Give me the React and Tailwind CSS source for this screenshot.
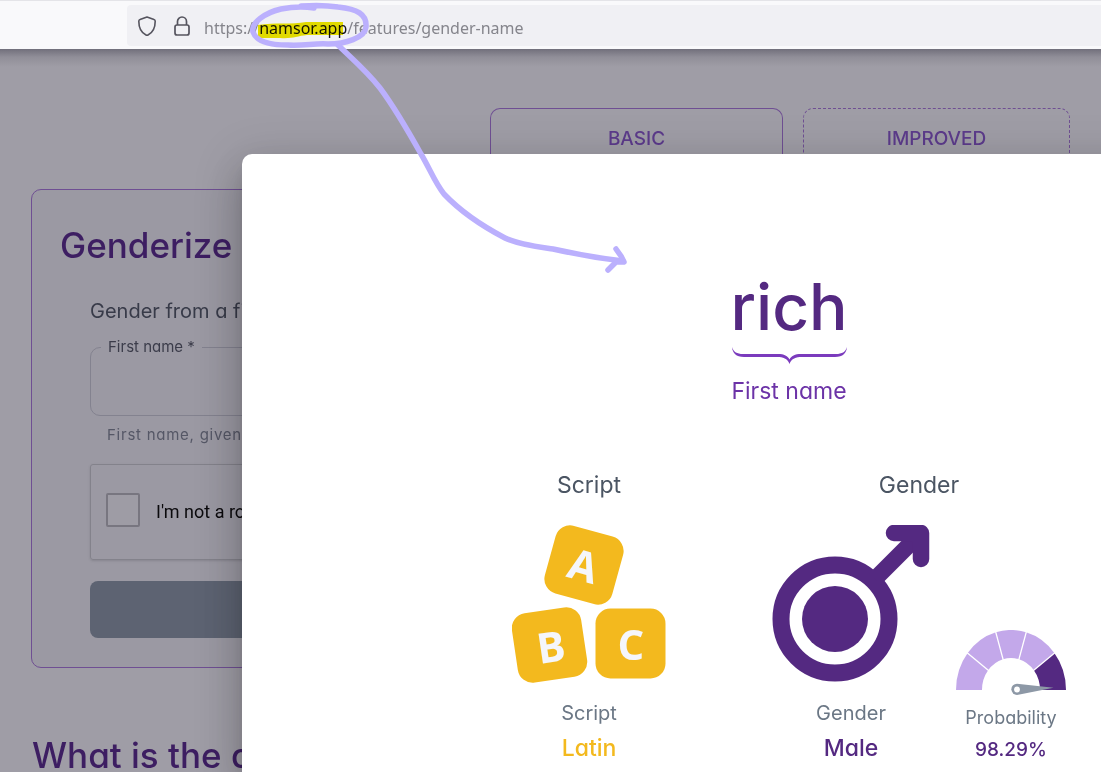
import React from "react";

function BrowserBar() {
  return (
    <header className="flex h-[49px] shrink-0 border-t border-[#e4e4e8] bg-[#f9f9fb] pt-1 pb-[3px] pl-[127px]">
      <div className="flex grow items-center rounded-l bg-[#f0f0f4] pl-[10px]">
        <svg className="mr-4 h-5 w-5" viewBox="0 0 20 20" fill="none" stroke="#55545e" strokeWidth="1.6" strokeLinejoin="round" aria-hidden="true">
          <path d="M10 1 L17 3.6 Q18.2 4 18.2 5.2 C18.2 12 16 16.500 11 19 Q10 19.500 9 19 C4 16.500 1.800 12 1.800 5.200 Q1.800 4 3 3.600 Z" />
        </svg>
        <svg className="mr-[13px] h-5 w-[18px]" viewBox="0 0 18 20" fill="none" stroke="#55545e" strokeWidth="1.7" aria-hidden="true">
          <rect x="2" y="9" width="14" height="10" rx="2" />
          <path d="M4.500 9 V5.500 a4.500 4.500 0 0 1 9 0 V9" />
        </svg>
        <a href="#top" className="pt-1 font-['Noto_Sans',sans-serif] text-base whitespace-nowrap text-[#85858c]">
          https://<span className="text-[#15141a]">namsor.app</span>/features/gender-name
        </a>
      </div>
    </header>
  );
}

function Tabs() {
  return (
    <nav className="flex h-[81px] gap-5 pl-[490px]">
      <button type="button" className="h-[62px] w-[293px] shrink-0 rounded-t-[10px] border border-b-0 border-[#6f4f93] text-[19px] font-medium text-[#5c3b8b]">BASIC</button>
      <button type="button" className="h-[62px] w-[267px] shrink-0 rounded-t-[10px] border border-b-0 border-dashed border-[#6f4f93] text-[19px] font-medium text-[#5c3b8b]">IMPROVED</button>
    </nav>
  );
}

function FormCard() {
  return (
    <form className="ml-[31px] flex h-[479px] w-[1040px] flex-col rounded-[10px] border border-[#6f4f93] bg-[#9b99a3] pt-8 pr-[58px] pl-[58px]">
      <h1 className="-ml-[30px] text-[35px] leading-[46px] font-medium text-[#3d1e62]">Genderize</h1>
      <p className="mt-[27px] text-xl leading-8 text-[#383b49]">Gender from a first name</p>
      <fieldset className="mt-[10px] h-[79px] rounded-[10px] border border-[#83828f] px-[10px]">
        <legend className="px-[7px] text-[15px] leading-5 text-[#3b3c4a]">
          <label htmlFor="first-name">First name *</label>
        </legend>
        <input id="first-name" className="h-12 w-full bg-transparent px-2 outline-none" />
      </fieldset>
      <p className="mt-[7px] pl-[17px] text-[15px] leading-6 tracking-wider text-[#555766]">First name, given name</p>
      <div className="mt-[17px] flex h-[96px] shrink-0 items-center rounded-[3px] border border-[#83828b] pb-1 pl-[15px] shadow-sm">
        <input id="robot" type="checkbox" className="h-[34px] w-[34px] appearance-none rounded-[2px] border-2 border-[#787680] bg-[#9e9ca5]" />
        <label htmlFor="robot" className="pt-1 pl-4 font-['Roboto',sans-serif] text-lg text-[#0b0a0d]">I'm not a robot</label>
      </div>
      <button type="button" aria-label="Submit" className="mt-[21px] h-[57px] shrink-0 rounded-lg bg-[#5d6372]" />
    </form>
  );
}

function Blocks() {
  return (
    <svg className="h-[158px] w-[154px]" viewBox="513 525 154 158" role="img" aria-label="Script">
      <g fill="#f3b91e">
        <rect x="550" y="530" width="70" height="70" rx="15" transform="rotate(15.500 585 565)" />
        <rect x="515.500" y="610" width="70" height="70" rx="15" transform="rotate(-8.500 550.500 645)" />
        <rect x="596.500" y="608.500" width="70" height="70" rx="15" />
      </g>
      <g fill="#f5f6fa" fontFamily="Open Sans, sans-serif" fontWeight="700" fontSize="42" textAnchor="middle">
        <text x="584" y="581" transform="rotate(15.500 584 567)">A</text>
        <text x="552" y="662" transform="rotate(-8.500 552 647)">B</text>
        <text x="632" y="660">C</text>
      </g>
    </svg>
  );
}

function MaleIcon() {
  return (
    <svg className="h-[158px] w-[158px]" viewBox="0 0 158 158" fill="none" stroke="#542981" role="img" aria-label="Male">
      <circle cx="63" cy="94" r="54" strokeWidth="17" />
      <circle cx="63" cy="94" r="33" fill="#542981" stroke="none" />
      <path d="M103 54 L148 9" strokeWidth="16.500" />
      <path d="M122 8 H149 V34" strokeWidth="16.500" strokeLinecap="round" strokeLinejoin="round" />
    </svg>
  );
}

const gaugeStops = [180, 142, 106, 74, 38, 0];
const polar = (rx, ry, deg) => {
  const a = (deg * Math.PI) / 180;
  return `${55 + rx * Math.cos(a)} ${60 - ry * Math.sin(a)}`;
};

function Gauge() {
  return (
    <svg className="h-[66px] w-[110px]" viewBox="0 0 110 66" role="img" aria-label="Probability gauge">
      {gaugeStops.slice(0, 5).map((from, i) => {
        const to = gaugeStops[i + 1];
        return (
          <path
            key={from}
            d={`M${polar(55, 60, from)} A55 60 0 0 1 ${polar(55, 60, to)} L${polar(29, 32, to)} A29 32 0 0 0 ${polar(29, 32, from)} Z`}
            fill={i === 4 ? "#542981" : "#c3a8ea"}
          />
        );
      })}
      {gaugeStops.slice(1, 5).map((a) => (
        <path key={a} d={`M${polar(27, 30, a)} L${polar(58, 63, a)}`} stroke="#fff" strokeWidth="1.300" />
      ))}
      <path d="M61 53.700 L97.500 57.800 L61 65 A5.600 5.600 0 1 1 61 53.700Z" fill="#8d98a6" />
      <circle cx="61" cy="59.500" r="2.900" fill="#fff" />
    </svg>
  );
}

function ResultDialog() {
  return (
    <section
      role="dialog"
      aria-label="Result"
      className="absolute top-[154px] -right-[235px] bottom-0 left-[242px] rounded-tl-[10px] bg-white shadow-[0_11px_15px_-7px_rgba(0,0,0,0.2),0_24px_38px_3px_rgba(0,0,0,0.14),0_9px_46px_8px_rgba(0,0,0,0.12)]"
    >
      <div className="flex flex-col items-center pt-[117px]">
        <h2 className="text-[64px] leading-[72px] font-medium text-[#542981]">rich</h2>
        <svg className="mt-1 h-[17px] w-[115px]" viewBox="0 0 115 17" fill="#7b3bbd" aria-hidden="true">
          <path d="M0 0 C1.500 5 5 7 11 7 H46 C52 7 56 9 57.500 12.500 C59 9 63 7 69 7 H104 C110 7 113.500 5 115 0 C114.500 6 111 10 103 10 H70 C64 10 59.500 11.500 57.500 17 C55.500 11.500 51 10 45 10 H12 C4 10 .5 6 0 0Z" />
        </svg>
        <p className="mt-[11px] text-[23px] leading-8 text-[#6c33a7]">First name</p>
      </div>
      <div className="mt-[62px] flex gap-[106px] pl-[270px]">
        <div className="flex w-[154px] flex-col items-center">
          <h3 className="text-[23px] leading-8 text-[#4b5563]">Script</h3>
          <div className="mt-6"><Blocks /></div>
          <p className="mt-[14px] text-xl leading-8 text-[#6b7785]">Script</p>
          <p className="mt-[3px] text-[23px] leading-8 font-medium text-[#f3b91e]">Latin</p>
        </div>
        <div className="flex w-[294px] flex-col items-center">
          <h3 className="text-[23px] leading-8 text-[#4b5563]">Gender</h3>
          <div className="mt-6 flex w-full justify-between">
            <div className="flex flex-col items-center">
              <MaleIcon />
              <p className="mt-[14px] text-xl leading-8 text-[#6b7785]">Gender</p>
              <p className="mt-[3px] text-[23px] leading-8 font-medium text-[#542981]">Male</p>
            </div>
            <div className="flex flex-col items-center pt-[105px]">
              <Gauge />
              <p className="mt-[6px] text-lg leading-8 text-[#6b7785]">Probability</p>
              <p className="text-[19px] leading-8 font-medium text-[#542981]">98.29%</p>
            </div>
          </div>
        </div>
      </div>
    </section>
  );
}

function Annotation() {
  return (
    <>
      <svg className="pointer-events-none absolute top-0 left-0 h-[300px] w-[700px] mix-blend-multiply" viewBox="0 0 700 300" aria-hidden="true">
        <path fill="#f0e800" d="M258 25 C275 22 292 25 306 22 L343 22 V35 L307 35 C297 36 292 39 280 38 L258 38Z" />
      </svg>
      <svg className="pointer-events-none absolute top-0 left-0 h-[300px] w-[700px]" viewBox="0 0 700 300" fill="none" stroke="#bbb0fd" strokeWidth="5.500" strokeLinecap="round" strokeLinejoin="round" aria-hidden="true">
        <path d="M314 8 C302 6 291 7 281 9 C264 13 251 23 253 32 C256 41 267 45 288 45 C304 46 315 43 328 44 C345 44 365 38 366 27 C367 14 357 9 338 7 C326 5 314 5 301 6" />
        <path d="M337 44 C350 57 366 70 380 88 C395 108 407 129 421 154 C430 169 435 183 444 194 C462 213 484 227 505 238 C519 245 539 247 553 249 C575 254 597 258 623 261" />
        <path d="M616 249 L621 256 L624 262 L616 262 L608 270" />
      </svg>
    </>
  );
}

export default function App() {
  return (
    <div id="top" className="relative flex h-screen flex-col overflow-hidden bg-[#9f9da6] font-['Inter',sans-serif] [font-feature-settings:'cv11'_1]">
      <BrowserBar />
      <main className="shrink-0 bg-[linear-gradient(#716f7b,#908e98_8px,#9f9da6_18px)] pt-[59px]">
        <Tabs />
        <FormCard />
        <h2 className="mt-16 pl-8 text-[35px] leading-[46px] font-medium whitespace-nowrap text-[#3d1e62]">What is the a</h2>
      </main>
      <ResultDialog />
      <Annotation />
    </div>
  );
}
